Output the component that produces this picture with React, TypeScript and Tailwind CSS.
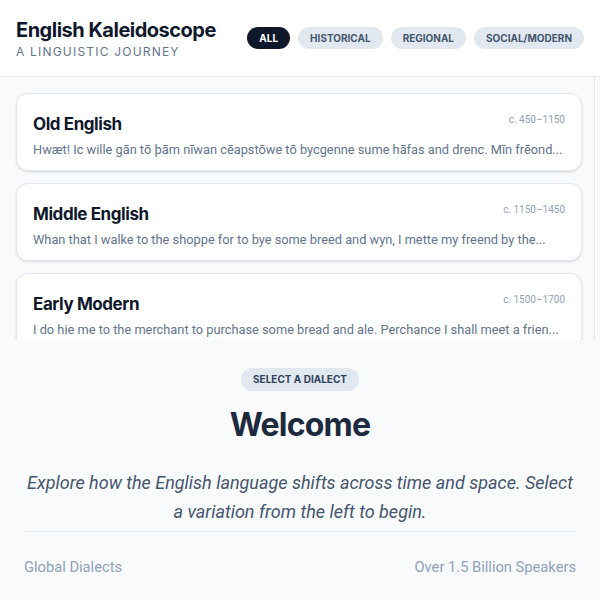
import React from 'react';

type Dialect = {
  name: string;
  period: string;
  sample: string;
};

const FILTERS = ['All', 'Historical', 'Regional', 'Social/Modern'];

const DIALECTS: Dialect[] = [
  {
    name: 'Old English',
    period: 'c. 450–1150',
    sample:
      'Hwæt! Ic wille gān tō þām nīwan cēapstōwe tō bycgenne sume hāfas and drenc. Mīn frēond...',
  },
  {
    name: 'Middle English',
    period: 'c. 1150–1450',
    sample:
      'Whan that I walke to the shoppe for to bye some breed and wyn, I mette my freend by the...',
  },
  {
    name: 'Early Modern',
    period: 'c. 1500–1700',
    sample:
      'I do hie me to the merchant to purchase some bread and ale. Perchance I shall meet a frien...',
  },
];

// Single dialect row in the list
const DialectCard = ({ dialect }: { dialect: Dialect }) => (
  <div className="h-[78px] shrink-0 rounded-xl border border-slate-200 bg-white px-4 pt-4 shadow-sm">
    <div className="flex items-start justify-between">
      <h2 className="font-['Inter',sans-serif] text-[17px] font-bold leading-7 tracking-tight text-slate-900">
        {dialect.name}
      </h2>
      <span className="pt-0.5 text-[10px] text-slate-400">{dialect.period}</span>
    </div>
    <p className="mt-0.5 truncate text-[12.8px] leading-5 text-slate-500">{dialect.sample}</p>
  </div>
);

export default function App() {
  const active = 'All';

  return (
    <div className="flex h-[600px] w-[600px] flex-col overflow-hidden bg-slate-50 font-['Roboto','Liberation_Sans',sans-serif]">
      {/* Header */}
      <header className="flex h-[77px] shrink-0 items-center justify-between border-b border-slate-200 bg-white px-4 font-['Inter',sans-serif]">
        <div>
          <h1 className="text-xl font-bold leading-7 tracking-tight text-slate-900">
            English Kaleidoscope
          </h1>
          <p className="text-xs uppercase leading-4 tracking-widest text-slate-500">
            A Linguistic Journey
          </p>
        </div>
        <nav className="flex items-center gap-2">
          {FILTERS.map((f) => (
            <button
              key={f}
              className={`h-[22px] rounded-full px-3 text-[10px] font-bold uppercase leading-none ${
                f === active ? 'bg-slate-900 text-white' : 'bg-slate-200 text-slate-600'
              }`}
            >
              {f}
            </button>
          ))}
        </nav>
      </header>

      {/* Dialect list */}
      <div className="flex h-[263px] shrink-0">
        <div className="flex flex-1 flex-col gap-3 overflow-hidden pl-4 pr-3 pt-4">
          {DIALECTS.map((d) => (
            <DialectCard key={d.name} dialect={d} />
          ))}
        </div>
        <div className="w-[6px] border-l border-slate-200 bg-slate-50" />
      </div>

      {/* Welcome panel */}
      <section className="flex flex-1 flex-col items-center px-6 pt-7">
        <span className="flex h-[23px] items-center rounded-full bg-slate-200 px-3 font-['Inter',sans-serif] text-[10px] font-bold uppercase text-slate-700">
          Select a Dialect
        </span>
        <h2 className="mt-[14px] font-['Inter',sans-serif] text-[32px] font-bold leading-10 tracking-tight text-slate-800">
          Welcome
        </h2>
        <p className="mt-[23px] text-center text-lg italic leading-[29px] text-slate-600">
          Explore how the English language shifts across time and space. Select a variation from
          the left to begin.
        </p>
        <div className="mt-[5px] flex w-full justify-between border-t border-slate-200 pt-6 text-[14.7px] text-slate-400">
          <span>Global Dialects</span>
          <span>Over 1.5 Billion Speakers</span>
        </div>
      </section>
    </div>
  );
}
